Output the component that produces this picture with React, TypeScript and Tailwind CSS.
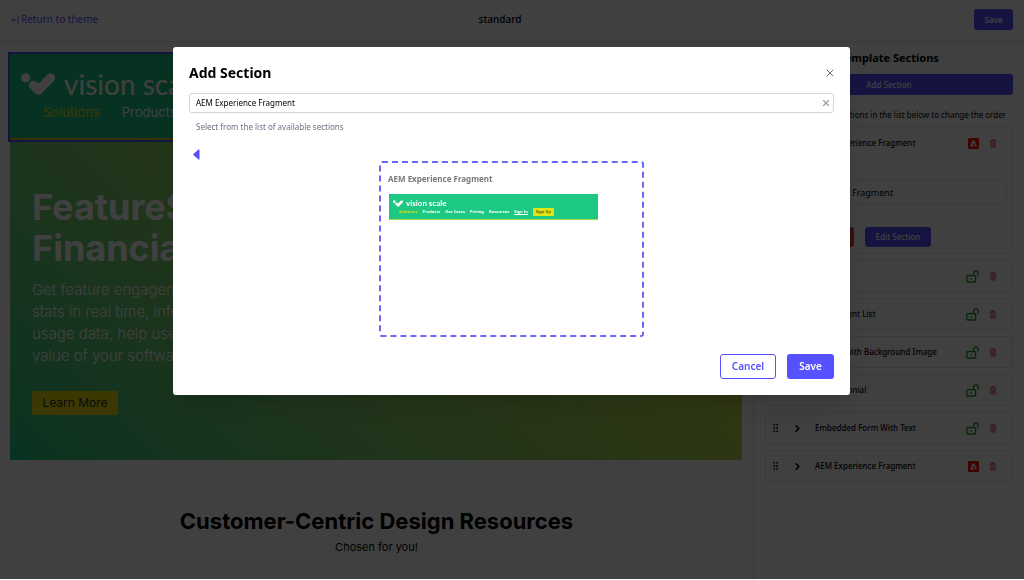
import { ChevronRight, X } from "lucide-react";

const UI_FONT = "font-['Noto_Sans',sans-serif]";
const SITE_FONT = "font-['Inter',sans-serif]";

type Section = { name: string; icon: "lock" | "adobe" };

const SECTIONS: Section[] = [
  { name: "Hero", icon: "lock" },
  { name: "Component List", icon: "lock" },
  { name: "Header with Background Image", icon: "lock" },
  { name: "A Testimonial", icon: "lock" },
  { name: "Embedded Form With Text", icon: "lock" },
  { name: "AEM Experience Fragment", icon: "adobe" },
];

const PREVIEW_LINKS = ["Products", "Use Cases", "Pricing", "Resources"];

function ReturnIcon() {
  return (
    <svg viewBox="0 0 8 8" className="h-2 w-2" fill="none" stroke="currentColor" aria-hidden="true">
      <path d="M7 0.5v7M5 4H0.8M2.5 2.3L0.8 4l1.7 1.7" strokeWidth="0.9" />
    </svg>
  );
}

function CheckLogo({ className }: { className: string }) {
  return (
    <svg viewBox="0 0 34 22" className={className} fill="currentColor" aria-hidden="true">
      <circle cx="4.5" cy="4.8" r="4.5" />
      <path d="M12.4 12.2L17.4 17.2L29.6 4.8" fill="none" stroke="currentColor" strokeWidth="9" strokeLinecap="round" strokeLinejoin="round" />
    </svg>
  );
}

function GripIcon() {
  return (
    <svg viewBox="0 0 6 8" className="h-2 w-1.5" fill="currentColor" aria-hidden="true">
      <path d="M0.5 0h1.6v1.6H0.5zM3.3 0h1.6v1.6H3.3zM0.5 3.1h1.6v1.6H0.5zM3.3 3.1h1.6v1.6H3.3zM0.5 6.2h1.6v1.6H0.5zM3.3 6.2h1.6v1.6H3.3z" />
    </svg>
  );
}

function UnlockIcon() {
  return (
    <svg viewBox="0 0 13 13" className="h-[13px] w-[13px] text-[#169c16]" fill="none" stroke="currentColor" aria-hidden="true">
      <rect x="0.8" y="5.6" width="8.8" height="6.4" rx="0.8" strokeWidth="1.3" />
      <path d="M7.6 5.5V3.2a2.2 2.2 0 0 1 4.5 0V5" strokeWidth="1.3" strokeLinecap="round" />
      <path d="M5.2 8v1.7" strokeWidth="1.3" />
    </svg>
  );
}

function AdobeIcon() {
  return (
    <svg viewBox="0 0 11 11" className="h-[11px] w-[11px]" aria-hidden="true">
      <rect width="11" height="11" rx="1.2" fill="#fa0f00" />
      <path d="M4.6 2.5h1.8L9 8.6H7.3L5.5 4.5 4.5 6.9h1.2l.6 1.7H2z" fill="#fff" />
    </svg>
  );
}

function TrashIcon() {
  return (
    <svg viewBox="0 0 8 9" className="h-[9px] w-2 text-[#e0343c]" fill="none" stroke="currentColor" aria-hidden="true">
      <path d="M0.9 2h6.2M2.8 1.8V0.8h2.4v1" strokeWidth="0.9" />
      <path d="M1.6 2.4l.3 5.6h4.2l.3-5.6M3.2 3.2v4.2M4.8 3.2v4.2" strokeWidth="0.8" />
    </svg>
  );
}

function SectionActions({ icon }: { icon: Section["icon"] }) {
  return (
    <div className="flex items-center gap-2.5">
      <button type="button" aria-label={icon === "lock" ? "Lock section" : "AEM settings"} className="flex w-[13px] justify-end">
        {icon === "lock" ? <UnlockIcon /> : <AdobeIcon />}
      </button>
      <button type="button" aria-label="Delete section">
        <TrashIcon />
      </button>
    </div>
  );
}

function SectionRow({ name, icon }: Section) {
  return (
    <div className="flex h-full items-center">
      <GripIcon />
      <button type="button" aria-label={`Expand ${name}`} className="ml-[13px] w-[11px]">
        <ChevronRight className="h-[11px] w-[11px]" strokeWidth={3.5} />
      </button>
      <span className="ml-3 flex-1 whitespace-nowrap text-[8px] font-medium">{name}</span>
      <SectionActions icon={icon} />
    </div>
  );
}

function TopBar() {
  return (
    <header className="grid h-[42px] grid-cols-[1fr_auto_1fr] items-center border-b border-gray-200 px-[11px] pb-0.5 shadow-xs">
      <a href="#theme" className="flex items-center gap-0.5 text-[10px] text-[#5551ff]">
        <ReturnIcon />
        Return to theme
      </a>
      <h1 className="pr-6 text-[10px] font-medium">standard</h1>
      <button type="button" className="h-[21px] w-[39px] justify-self-end rounded-[3px] bg-[#5551ff] text-[8px] font-semibold text-white">
        Save
      </button>
    </header>
  );
}

function SitePreview() {
  return (
    <div className={`min-w-0 flex-1 px-2 pt-2.5 ${SITE_FONT}`}>
      <div className="mr-px h-[90px] border-2 border-[#5551ff] bg-[#1cc882]">
        <div className="h-full border-b-2 border-[#d4c814] px-[11px] pt-3 text-white">
          <div className="flex h-9 items-center gap-[9px]">
            <CheckLogo className="h-[22px] w-[34px]" />
            <span className="font-['Lato',sans-serif] text-[28px] leading-9">vision scale</span>
          </div>
          <nav className="flex gap-[22px] pl-[22px] text-[13px] leading-5">
            <a href="#solutions" className="text-[#e6dc14]">Solutions</a>
            {PREVIEW_LINKS.map((link) => (
              <a key={link} href="#products">{link}</a>
            ))}
          </nav>
        </div>
      </div>
      <section className="ml-0.5 mr-[3px] h-[318px] bg-linear-45 from-[#1cc882] to-[#dcdc14] px-[22px] pt-[45px] text-white">
        <h2 className="text-4xl font-bold leading-[41px]">
          FeatureSet for
          <br />
          Financial Teams
        </h2>
        <p className="mt-2.5 text-[15px] font-light leading-[22px]">
          Get feature engagement and
          <br />
          stats in real time, informed by
          <br />
          usage data, help users get the
          <br />
          value of your software
        </p>
        <button type="button" className="mt-6 h-6 w-[86px] rounded-[2px] bg-[#f0e010] text-xs text-[#333333]">
          Learn More
        </button>
      </section>
      <section className="pt-[45px] text-center">
        <h2 className="text-[22px] font-bold leading-8">Customer-Centric Design Resources</h2>
        <p className="text-[11px] leading-5">Chosen for you!</p>
      </section>
    </div>
  );
}

function Sidebar() {
  return (
    <aside className="w-[271px] border-l border-gray-200 px-[11px]">
      <h2 className="pt-2 text-center text-[11px] font-bold leading-4">Template Sections</h2>
      <button type="button" className="mt-2 block h-[21px] w-full rounded-[3px] bg-[#5551ff] text-[8px] font-medium text-white">
        Add Section
      </button>
      <p className="mt-3 whitespace-nowrap pr-[7px] text-right text-[8px] leading-4">
        Drag and drop the sections in the list below to change the order
      </p>
      <div className="mt-[3px] flex flex-col gap-1.5">
        <div className="h-[128px] rounded-[3px] border border-gray-200 pl-[7px] pr-[15px]">
          <div className="h-8">
            <SectionRow name="AEM Experience Fragment" icon="adobe" />
          </div>
          <div className="-mr-2.5 pt-[21px]">
            <input
              aria-label="Section name"
              defaultValue="AEM Experience Fragment"
              className="block h-6 w-full rounded-[3px] border border-gray-200 pl-2 text-[9px] outline-none"
            />
          </div>
          <div className="mt-[23px] flex gap-[11px] pl-[31px] text-[8px] font-medium text-white">
            <button type="button" className="h-5 w-[50px] rounded-[3px] bg-[#e0343c]">
              Delete
            </button>
            <button type="button" className="h-5 w-[66px] rounded-[3px] bg-[#5551ff]">
              Edit Section
            </button>
          </div>
        </div>
        {SECTIONS.map((section) => (
          <div key={section.name} className="h-8 rounded-[3px] border border-gray-200 pl-[7px] pr-[15px]">
            <SectionRow {...section} />
          </div>
        ))}
      </div>
    </aside>
  );
}

function FragmentThumbnail() {
  return (
    <div className="mt-[7px] ml-px h-[26px] w-[209px] border-b border-[#a5d84a] bg-[#1cc882] pl-1 pt-[5px] text-white">
      <div className="flex items-center gap-[3px]">
        <CheckLogo className="h-[7px] w-[10px]" />
        <span className="font-['Lato',sans-serif] text-[8px] font-bold leading-[9px]">vision scale</span>
      </div>
      <div className="flex items-center gap-[5px] pl-1.5 text-[4px] font-bold leading-[8px]">
        <span className="text-[#d8dc1e]">Solutions</span>
        {PREVIEW_LINKS.map((link) => (
          <span key={link}>{link}</span>
        ))}
        <span className="underline underline-offset-1">Sign In</span>
        <span className="rounded-[1px] bg-[#e0e414] px-[3px] text-[#5c6414]">Sign Up</span>
      </div>
    </div>
  );
}

function AddSectionDialog() {
  return (
    <div
      role="dialog"
      aria-modal="true"
      aria-labelledby="add-section-title"
      className="w-[677px] max-w-full rounded-[3px] bg-white p-4 shadow-xl"
    >
      <div className="flex items-center justify-between">
        <h2 id="add-section-title" className="text-sm font-bold leading-5">Add Section</h2>
        <button type="button" aria-label="Close" className="text-gray-500">
          <X className="-mr-0.5 h-3 w-3" strokeWidth={2} />
        </button>
      </div>
      <div className="mt-2.5 flex h-5 items-center rounded-[3px] border border-gray-300 pl-1.5 pr-0.5">
        <input
          id="section-type"
          aria-describedby="section-help"
          aria-label="Section"
          defaultValue="AEM Experience Fragment"
          className="min-w-0 flex-1 text-[8px] leading-4 outline-none"
        />
        <button type="button" aria-label="Clear" className="text-gray-400">
          <X className="h-2.5 w-2.5" strokeWidth={3} />
        </button>
      </div>
      <p id="section-help" className="mt-1.5 pl-[7px] text-[8px] leading-4 text-gray-500">
        Select from the list of available sections
      </p>
      <button type="button" aria-label="Back" className="mt-3.5 ml-1 block text-[#5551ff]">
        <svg viewBox="0 0 7 12" className="h-3 w-[7px]" fill="currentColor" aria-hidden="true">
          <path d="M6.5 0.5v10L5.5 10.5L0.4 6.1Q0 5.5 0.4 4.9L5.5 0.5Z" />
        </svg>
      </button>
      <div className="mx-auto h-44 w-[265px] rounded-[3px] border-2 border-dashed border-[#6a67ff] px-[7px] pt-2">
        <h3 className="text-[8px] font-bold leading-4 text-[#7a7a7a]">AEM Experience Fragment</h3>
        <FragmentThumbnail />
      </div>
      <div className="mt-[17px] flex justify-end gap-[11px] text-[10px] font-semibold">
        <button type="button" className="h-[25px] w-14 rounded-[3px] border border-[#5551ff] text-[#5551ff]">
          Cancel
        </button>
        <button type="button" className="h-[25px] w-[47px] rounded-[3px] bg-[#5551ff] text-white">
          Save
        </button>
      </div>
    </div>
  );
}

export default function App() {
  return (
    <div className={`min-h-screen bg-white text-black ${UI_FONT}`}>
      <TopBar />
      <main className="flex min-h-[calc(100vh-42px)] items-stretch">
        <SitePreview />
        <Sidebar />
      </main>
      <div className="fixed inset-x-0 top-0 bottom-px flex items-start justify-center bg-black/75 pt-[47px] pr-px">
        <AddSectionDialog />
      </div>
    </div>
  );
}
